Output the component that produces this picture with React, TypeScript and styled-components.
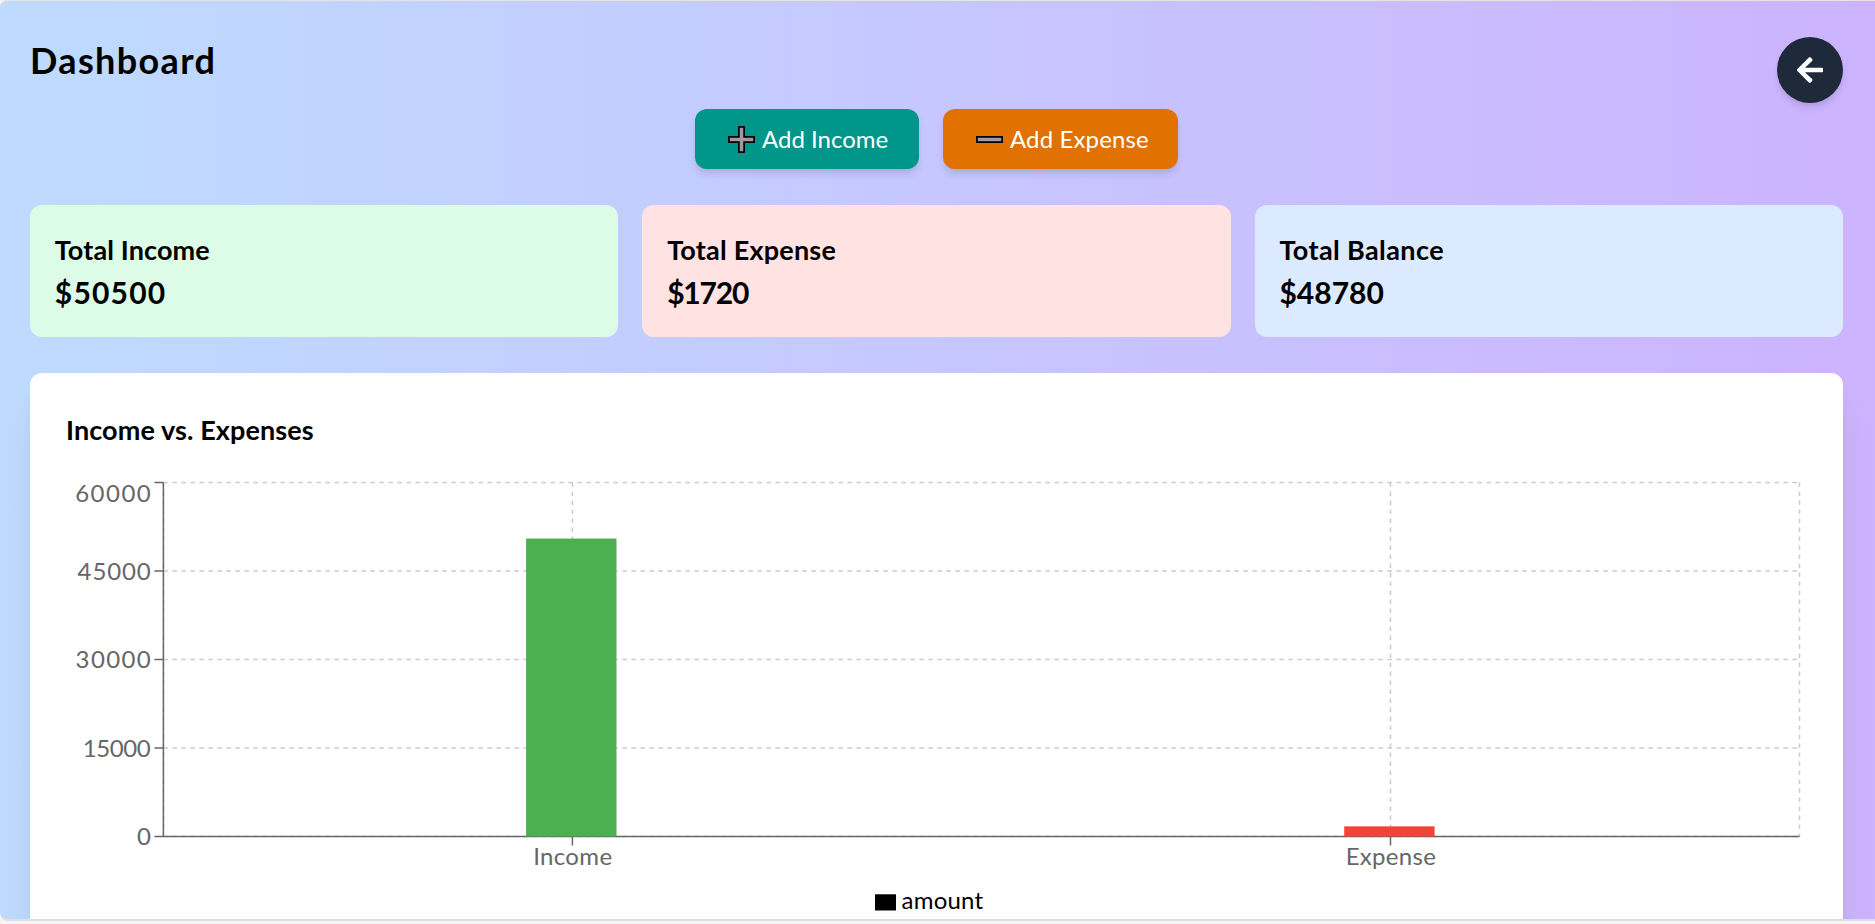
import React from 'react';
import styled, { createGlobalStyle } from 'styled-components';

const GlobalStyle = createGlobalStyle`
  * { box-sizing: border-box; margin: 0; }
  body {
    margin: 0;
    height: 924px;
    overflow: hidden;
    background: #f5f5f5;
    color: #000;
    font-family: Lato, 'Open Sans', sans-serif;
  }
`;

const Frame = styled.div`
  height: 921px;
  border-top: 1px solid #e4e4e8;
  border-bottom: 2px solid #dedede;
  border-radius: 6px 0 0 8px;
  overflow: hidden;
`;

const Page = styled.main`
  height: 918px;
  overflow: hidden;
  padding: 35px 32px 0 30px;
  border-radius: 6px 0 0 6px;
  background: linear-gradient(to right, #bedbff, #cdb3ff);
`;

const Header = styled.header`
  display: flex;
  justify-content: space-between;
  align-items: flex-start;
  height: 73px;
`;

const PageTitle = styled.h1`
  font-size: 36px;
  line-height: 48px;
  font-weight: 700;
  letter-spacing: 1.35px;
`;

const BackButton = styled.button`
  display: flex;
  align-items: center;
  justify-content: center;
  width: 66px;
  height: 66px;
  margin-top: 1px;
  padding: 0;
  border: 0;
  border-radius: 50%;
  background: #1e2939;
  color: #fff;
  box-shadow: 0 6px 9px -1.5px rgba(0, 0, 0, 0.1), 0 3px 6px -3px rgba(0, 0, 0, 0.1);
`;

const Actions = styled.div`
  display: flex;
  justify-content: center;
  gap: 24px;
  margin-bottom: 36px;
`;

const ActionButton = styled.button<{ $color: string; $width: number; $spacing: number }>`
  display: flex;
  align-items: center;
  gap: 7px;
  width: ${p => p.$width}px;
  height: 60px;
  padding: 0 0 0 33px;
  border: 0;
  border-radius: 12px;
  background: ${p => p.$color};
  color: #fff;
  font: 400 24px/36px Lato, 'Open Sans', sans-serif;
  letter-spacing: ${p => p.$spacing}px;
  white-space: nowrap;
  box-shadow: 0 6px 9px -1.5px rgba(0, 0, 0, 0.1), 0 3px 6px -3px rgba(0, 0, 0, 0.1);
`;

const Summary = styled.section`
  display: grid;
  grid-template-columns: repeat(3, 1fr);
  gap: 24px;
  margin-bottom: 36px;
`;

const SummaryCard = styled.article<{ $color: string }>`
  height: 132px;
  padding: 24px 24px 24px 24.8px;
  border-radius: 12px;
  background: ${p => p.$color};
`;

const CardTitle = styled.h2<{ $spacing: number }>`
  font-size: 27px;
  line-height: 42px;
  font-weight: 700;
  letter-spacing: ${p => p.$spacing}px;
`;

const CardValue = styled.p<{ $spacing: number }>`
  font-size: 30px;
  line-height: 42px;
  font-weight: 700;
  letter-spacing: ${p => p.$spacing}px;
`;

const ChartCard = styled.section`
  height: 600px;
  padding: 36px;
  border-radius: 12px;
  background: #fff;
  box-shadow: 0 30px 37.5px -7.5px rgba(0, 0, 0, 0.1), 0 12px 15px -9px rgba(0, 0, 0, 0.1);
`;

const ChartTitle = styled(CardTitle)`
  margin-bottom: 24px;
`;

const Chart = styled.svg`
  display: block;
  width: 1741px;
  height: 450px;
  font-family: Lato, 'Open Sans', sans-serif;
  font-size: 24px;
`;

const cards = [
  { title: 'Total Income', value: '$50500', color: '#dcfce7', titleSpacing: 0.12, valueSpacing: 1.2 },
  { title: 'Total Expense', value: '$1720', color: '#ffe2e2', titleSpacing: 0.22, valueSpacing: -1.2 },
  { title: 'Total Balance', value: '$48780', color: '#dbeafe', titleSpacing: 0.4, valueSpacing: 0 },
];

const LEFT = 97.4;
const RIGHT = 1733.5;
const TOP = 7.5;
const BOTTOM = 361.5;
const MAX = 60000;

const ticks = [
  { value: 60000, spacing: 1.5, baseline: 27.2 },
  { value: 45000, spacing: 0.9, baseline: 105 },
  { value: 30000, spacing: 1.4, baseline: 193.3 },
  { value: 15000, spacing: -0.4, baseline: 281.7 },
  { value: 0, spacing: 0, baseline: 370 },
];

const bars = [
  { name: 'Income', value: 50500, color: '#4caf50', center: 506.4, left: 460.1, spacing: 0.35 },
  { name: 'Expense', value: 1720, color: '#f44336', center: 1324.5, left: 1278.2, spacing: 0.3 },
];

const yOf = (v: number) => BOTTOM - (v / MAX) * (BOTTOM - TOP);

const ArrowLeft = () => (
  <svg width="26.25" height="30" viewBox="0 0 448 512" fill="currentColor">
    <path d="M257.5 445.1l-22.2 22.2c-9.4 9.4-24.6 9.4-33.9 0L7 273c-9.4-9.4-9.4-24.6 0-33.9L201.4 44.7c9.4-9.4 24.6-9.4 33.9 0l22.2 22.2c9.5 9.5 9.3 25-.4 34.3L136.6 216H424c13.3 0 24 10.7 24 24v32c0 13.3-10.7 24-24 24H136.6l120.5 114.8c9.8 9.3 10 24.8.4 34.3z" />
  </svg>
);

const PlusIcon = () => (
  <svg width="27" height="27" viewBox="0 0 27 27" fill="#9f9b9f" stroke="#000" strokeWidth="1.7">
    <path d="M10.9 .9h5.2v10h10v5.2h-10v10h-5.2v-10h-10v-5.2h10z" />
  </svg>
);

const MinusIcon = () => (
  <svg width="27" height="27" viewBox="0 0 27 27" fill="#9f9b9f" stroke="#000" strokeWidth="1.7">
    <path d="M.9 10.9h25.2v5.2H.9z" />
  </svg>
);

export default function App() {
  return (
    <>
      <GlobalStyle />
      <Frame>
        <Page>
          <Header>
            <PageTitle>Dashboard</PageTitle>
            <BackButton aria-label="Back">
              <ArrowLeft />
            </BackButton>
          </Header>
          <Actions>
            <ActionButton $color="#009689" $width={224} $spacing={0}>
              <PlusIcon />
              Add Income
            </ActionButton>
            <ActionButton $color="#e17100" $width={235} $spacing={0.13}>
              <MinusIcon />
              Add Expense
            </ActionButton>
          </Actions>
          <Summary>
            {cards.map(c => (
              <SummaryCard key={c.title} $color={c.color}>
                <CardTitle $spacing={c.titleSpacing}>{c.title}</CardTitle>
                <CardValue $spacing={c.valueSpacing}>{c.value}</CardValue>
              </SummaryCard>
            ))}
          </Summary>
          <ChartCard>
            <ChartTitle $spacing={0.1}>Income vs. Expenses</ChartTitle>
            <Chart viewBox="0 0 1741 450">
              <g stroke="#ccc" strokeWidth="1.5" strokeDasharray="4.5 4.5">
                {ticks.map(t => (
                  <line key={t.value} x1={LEFT} x2={RIGHT} y1={yOf(t.value)} y2={yOf(t.value)} />
                ))}
                {[LEFT, bars[0].center, bars[1].center, RIGHT].map(x => (
                  <line key={x} x1={x} x2={x} y1={TOP} y2={BOTTOM} />
                ))}
              </g>
              <g stroke="#666" strokeWidth="1.5">
                <line x1={LEFT} x2={LEFT} y1={TOP} y2={BOTTOM} />
                <line x1={LEFT} x2={RIGHT} y1={BOTTOM} y2={BOTTOM} />
                {ticks.map(t => (
                  <line key={t.value} x1={LEFT - 9} x2={LEFT} y1={yOf(t.value)} y2={yOf(t.value)} />
                ))}
                {bars.map(b => (
                  <line key={b.name} x1={b.center} x2={b.center} y1={BOTTOM} y2={BOTTOM + 9} />
                ))}
              </g>
              {bars.map(b => (
                <rect
                  key={b.name}
                  x={b.left}
                  y={yOf(b.value)}
                  width="90.4"
                  height={BOTTOM - yOf(b.value)}
                  fill={b.color}
                />
              ))}
              <g fill="#666">
                {ticks.map(t => (
                  <text key={t.value} x={84.8 + t.spacing} y={t.baseline} textAnchor="end" letterSpacing={t.spacing}>
                    {t.value}
                  </text>
                ))}
                {bars.map(b => (
                  <text key={b.name} x={b.center + 0.4} y="390" textAnchor="middle" letterSpacing={b.spacing}>
                    {b.name}
                  </text>
                ))}
              </g>
              <rect x="809" y="419.3" width="21" height="16.2" />
              <text x="835.6" y="434" letterSpacing="0.2">
                amount
              </text>
            </Chart>
          </ChartCard>
        </Page>
      </Frame>
    </>
  );
}
